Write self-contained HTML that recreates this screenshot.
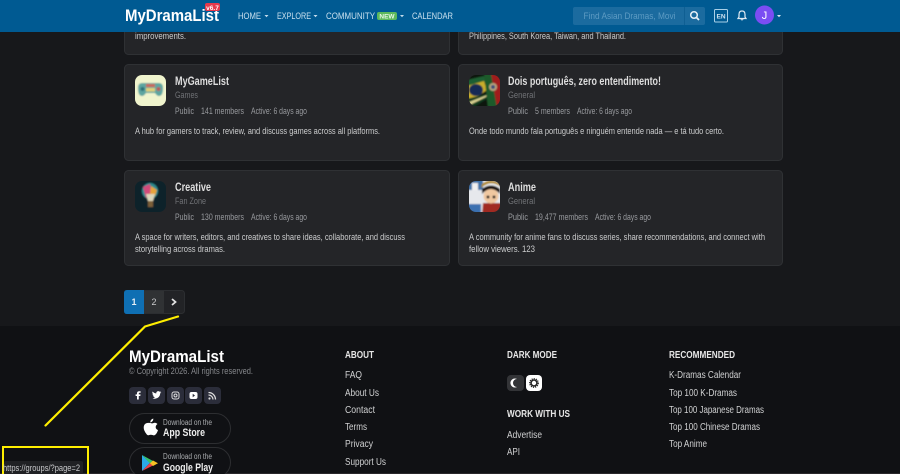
<!DOCTYPE html>
<html lang="en"><head><meta charset="utf-8"><title>Groups - MyDramaList</title>
<style>
html,body{margin:0;padding:0;width:900px;height:474px;overflow:hidden;background:#17181b}
svg{display:block;filter:blur(.3px)}
text{font-family:"Liberation Sans",sans-serif;white-space:pre}
.nav{font-size:9.2px;fill:#c9e0ee}
.t{font-size:11.500px;font-weight:bold;fill:#dedede}
.s{font-size:8.800px;fill:#707276}
.m{font-size:8.800px;fill:#989a9e}
.d{font-size:8.800px;fill:#cbcccd}
.h{font-size:9.800px;font-weight:bold;fill:#e6e6e6}
.l{font-size:9.800px;fill:#d0d1d2}
</style></head><body>
<svg width="900" height="474" viewBox="0 0 900 474" xmlns="http://www.w3.org/2000/svg">
<defs>
<clipPath id="c1"><rect x="135" y="75" width="31" height="31" rx="7"/></clipPath>
<clipPath id="c2"><rect x="469" y="75" width="31" height="31" rx="7"/></clipPath>
<clipPath id="c3"><rect x="135" y="181" width="31" height="31" rx="7"/></clipPath>
<clipPath id="c4"><rect x="469" y="181" width="31" height="31" rx="7"/></clipPath>
<filter id="b" x="-10%" y="-10%" width="120%" height="120%"><feGaussianBlur stdDeviation=".7"/></filter>
</defs>
<rect width="900" height="474" fill="#17181b"/>

<!-- cards -->
<g fill="#242528" stroke="#2f3134">
<rect x="124.500" y="10.500" width="325" height="44" rx="4"/>
<rect x="458.500" y="10.500" width="324" height="44" rx="4"/>
<rect x="124.500" y="64.500" width="325" height="96" rx="4"/>
<rect x="458.500" y="64.500" width="324" height="96" rx="4"/>
<rect x="124.500" y="170.500" width="325" height="95" rx="4"/>
<rect x="458.500" y="170.500" width="324" height="95" rx="4"/>
</g>
<text class="d" x="135" y="39" textLength="51" lengthAdjust="spacingAndGlyphs">improvements.</text>
<text class="d" x="469" y="39" textLength="157" lengthAdjust="spacingAndGlyphs">Philippines, South Korea, Taiwan, and Thailand.</text>

<!-- card: MyGameList -->
<g clip-path="url(#c1)"><g filter="url(#b)">
<rect x="133" y="73" width="35" height="35" fill="#f0f4cd"/>
<path d="M142 83 H159 Q163 83 163 88 Q163 96 159 96 Q157 96 155 93 H146 Q144 96 142 96 Q138 96 138 88 Q138 83 142 83Z" fill="#5da5a0"/>
<rect x="146" y="84" width="9" height="3" fill="#c9675c"/>
<rect x="146" y="88" width="9" height="3.500" fill="#e0d078"/>
<circle cx="142.500" cy="89" r="2" fill="#2e6f78"/><circle cx="158.500" cy="89" r="2" fill="#b95c58"/>
</g></g>
<text class="t" x="175" y="85" textLength="54" lengthAdjust="spacingAndGlyphs">MyGameList</text>
<text class="s" x="175" y="98" textLength="23" lengthAdjust="spacingAndGlyphs">Games</text>
<text class="m" x="175" y="114" textLength="19" lengthAdjust="spacingAndGlyphs">Public</text>
<text class="m" x="201" y="114" textLength="43" lengthAdjust="spacingAndGlyphs">141 members</text>
<text class="m" x="251" y="114" textLength="56" lengthAdjust="spacingAndGlyphs">Active: 6 days ago</text>
<text class="d" x="135" y="134" textLength="245" lengthAdjust="spacingAndGlyphs">A hub for gamers to track, review, and discuss games across all platforms.</text>

<!-- card: Dois -->
<g clip-path="url(#c2)"><g filter="url(#b)">
<rect x="467" y="73" width="35" height="35" fill="#10160f"/>
<path d="M467 80 L484 76 L487 82 L467 90Z" fill="#1b5f30"/>
<path d="M467 86 L484 81 L487 90 L474 99 L467 98Z" fill="#c9ae2a"/>
<ellipse cx="476" cy="90" rx="7" ry="6" fill="#152a55"/>
<path d="M467 99 L486 94 L488 98 L472 108 L467 108Z" fill="#0f3a1e"/>
<path d="M469 102 L487 95 L486 97 L470 105Z" fill="#d8d090"/>
<path d="M490 73 H502 V108 H496Z" fill="#a01c1c"/>
<path d="M484 73 L491 73 L497 108 L488 108Z" fill="#1a5a2b"/>
<circle cx="493" cy="87" r="4" fill="#b5a57f"/><circle cx="493" cy="87" r="2" fill="#3a4f7a"/>
</g></g>
<text class="t" x="508" y="85" textLength="153" lengthAdjust="spacingAndGlyphs">Dois português, zero entendimento!</text>
<text class="s" x="508" y="98" textLength="27" lengthAdjust="spacingAndGlyphs">General</text>
<text class="m" x="508" y="114" textLength="20" lengthAdjust="spacingAndGlyphs">Public</text>
<text class="m" x="535" y="114" textLength="35" lengthAdjust="spacingAndGlyphs">5 members</text>
<text class="m" x="577" y="114" textLength="55" lengthAdjust="spacingAndGlyphs">Active: 6 days ago</text>
<text class="d" x="469" y="134" textLength="255" lengthAdjust="spacingAndGlyphs">Onde todo mundo fala português e ninguém entende nada — e tá tudo certo.</text>

<!-- card: Creative -->
<g clip-path="url(#c3)"><g filter="url(#b)">
<rect x="133" y="179" width="35" height="35" fill="#0f2029"/>
<circle cx="150" cy="191" r="8" fill="#2b8a8f"/>
<path d="M143 187 L150 184 L152 193 L146 198Z" fill="#d24a7c"/>
<path d="M151 186 L157 190 L155 196 L150 194Z" fill="#e6a43a"/>
<path d="M146 194 L155 194 L153 201 L148 201Z" fill="#dcd6ba"/>
<rect x="148" y="201" width="5" height="6" fill="#7a5f38"/>
</g></g>
<text class="t" x="175" y="191" textLength="36" lengthAdjust="spacingAndGlyphs">Creative</text>
<text class="s" x="175" y="204" textLength="31" lengthAdjust="spacingAndGlyphs">Fan Zone</text>
<text class="m" x="175" y="220" textLength="19" lengthAdjust="spacingAndGlyphs">Public</text>
<text class="m" x="201" y="220" textLength="43" lengthAdjust="spacingAndGlyphs">130 members</text>
<text class="m" x="251" y="220" textLength="56" lengthAdjust="spacingAndGlyphs">Active: 6 days ago</text>
<text class="d" x="135" y="240" textLength="270" lengthAdjust="spacingAndGlyphs">A space for writers, editors, and creatives to share ideas, collaborate, and discuss</text>
<text class="d" x="135" y="252" textLength="90" lengthAdjust="spacingAndGlyphs">storytelling across dramas.</text>

<!-- card: Anime -->
<g clip-path="url(#c4)"><g filter="url(#b)">
<rect x="467" y="179" width="35" height="35" fill="#e6e8ec"/>
<rect x="467" y="179" width="16" height="11" fill="#3f72a8"/>
<rect x="472" y="183" width="6" height="7" fill="#f0f0f0"/>
<path d="M467 204 H481 V214 H467Z" fill="#3a6fb0"/>
<path d="M483 203 H502 V214 H482Z" fill="#a12a22"/>
<circle cx="491" cy="196" r="7.500" fill="#f0c8a0"/>
<path d="M482 194 Q491 184 500 194 L500 189 Q491 182 482 189Z" fill="#14100f"/>
<path d="M481 188 Q491 179 501 187 L500 184 Q491 177 482 184Z" fill="#b08a28"/>
<circle cx="488" cy="197" r="1.500" fill="#111"/><circle cx="494" cy="197" r="1.500" fill="#111"/>
</g></g>
<text class="t" x="508" y="191" textLength="28" lengthAdjust="spacingAndGlyphs">Anime</text>
<text class="s" x="508" y="204" textLength="27" lengthAdjust="spacingAndGlyphs">General</text>
<text class="m" x="508" y="220" textLength="20" lengthAdjust="spacingAndGlyphs">Public</text>
<text class="m" x="535" y="220" textLength="53" lengthAdjust="spacingAndGlyphs">19,477 members</text>
<text class="m" x="595" y="220" textLength="56" lengthAdjust="spacingAndGlyphs">Active: 6 days ago</text>
<text class="d" x="469" y="240" textLength="296" lengthAdjust="spacingAndGlyphs">A community for anime fans to discuss series, share recommendations, and connect with</text>
<text class="d" x="469" y="252" textLength="66" lengthAdjust="spacingAndGlyphs">fellow viewers. 123</text>

<!-- pagination -->
<rect x="124.500" y="290.500" width="60" height="23" rx="3" fill="#222326" stroke="#2c2e31"/>
<rect x="144" y="291" width="20" height="22" fill="#303234"/>
<path d="M127 290 H144 V314 H127 Q124 314 124 311 V293 Q124 290 127 290Z" fill="#0f6fb3"/>
<text x="134" y="305" text-anchor="middle" font-size="9" font-weight="bold" fill="#e6eef5">1</text>
<text x="154" y="305" text-anchor="middle" font-size="9" fill="#c9cacc">2</text>
<path d="M172 299 L175.500 302 L172 305" fill="none" stroke="#e2e2e2" stroke-width="1.800"/>

<!-- footer -->
<rect x="0" y="326" width="900" height="148" fill="#101114"/>
<rect x="0" y="473" width="900" height="1" fill="#29272a"/>
<text x="129" y="362" font-size="17px" font-weight="bold" fill="#fff" textLength="95" lengthAdjust="spacingAndGlyphs">MyDramaList</text>
<text x="129" y="374" font-size="8.800px" fill="#85878b" textLength="124" lengthAdjust="spacingAndGlyphs">© Copyright 2026. All rights reserved.</text>

<g fill="#2b2d3a">
<rect x="129" y="387" width="17" height="17" rx="4"/>
<rect x="148" y="387" width="17" height="17" rx="4"/>
<rect x="167" y="387" width="17" height="17" rx="4"/>
<rect x="185" y="387" width="17" height="17" rx="4"/>
<rect x="204" y="387" width="17" height="17" rx="4"/>
</g>
<path d="M138.800 399.500 V396 H140.300 L140.500 394.400 H138.800 V393.400 Q138.800 392.700 139.600 392.700 H140.600 V391.200 H139.200 Q137 391.200 137 393.200 V394.400 H135.600 V396 H137 V399.500Z" fill="#fff"/>
<path d="M152.500 398.500 Q154 398.900 155.500 398.600 Q159.800 397.800 160.300 393.200 L161.300 392.100 L160 392.400 L160.900 391.300 L159.700 391.800 Q158.200 390.500 156.700 391.900 Q156 392.700 156.300 393.400 Q154 393.300 152.600 391.500 Q151.800 393 153.200 394.300 L152.500 394.100 Q152.600 395.500 153.900 396 L153.100 396 Q153.600 397 154.900 397.200 Q153.900 398.100 152.500 398.500Z" fill="#fff"/>
<rect x="172" y="392" width="7" height="7" rx="2" fill="none" stroke="#ddd" stroke-width="1"/>
<circle cx="175.500" cy="395.500" r="1.500" fill="none" stroke="#ddd" stroke-width="1"/>
<rect x="189.500" y="392" width="8" height="7" rx="2" fill="#fff"/><path d="M192.700 393.800 L195 395.500 L192.700 397.200Z" fill="#2b2d3a"/>
<circle cx="209.500" cy="398.500" r="1.100" fill="#ddd"/>
<path d="M208.500 395 A4.500 4.500 0 0 1 213 399.500 M208.500 392.500 A7 7 0 0 1 215.500 399.500" fill="none" stroke="#ddd" stroke-width="1.300"/>

<rect x="129.500" y="413.500" width="101" height="30" rx="15" fill="#101114" stroke="#2d2e31"/>
<rect x="129.500" y="447.500" width="101" height="30" rx="15" fill="#101114" stroke="#2d2e31"/>
<path d="M150.500 423 Q152 423.800 154 422.900 Q156 422.300 157.500 424 Q155.500 425.500 155.700 427.500 Q156 429.300 158 430 Q157 433.500 155 435 Q153.800 435.700 152.500 435 Q150.800 434.400 149.300 435 Q148 435.800 146.800 434.500 Q143.500 430.500 143.700 427 Q144.200 423.500 147 423 Q148.800 422.700 150.500 423Z" fill="#fff"/>
<path d="M150.200 422.500 Q150.200 419.500 153.300 418.500 Q153.500 421.700 150.200 422.500Z" fill="#fff"/>
<text x="163" y="425" font-size="7.800px" fill="#aaacaf" textLength="49" lengthAdjust="spacingAndGlyphs">Download on the</text>
<text x="163" y="436" font-size="11px" font-weight="bold" fill="#eee" textLength="42" lengthAdjust="spacingAndGlyphs">App Store</text>
<path d="M142 455 L150 463 L142 471Z" fill="#2aa9e8"/>
<path d="M142 455 L153 461 L150 463.500Z" fill="#35c26a"/>
<path d="M142 471 L153 465.500 L150 463Z" fill="#e8434a"/>
<path d="M153 460.500 L158 463.200 L153 466 L150 463.200Z" fill="#f7c325"/>
<text x="163" y="459" font-size="7.800px" fill="#aaacaf" textLength="49" lengthAdjust="spacingAndGlyphs">Download on the</text>
<text x="163" y="471" font-size="11px" font-weight="bold" fill="#eee" textLength="50" lengthAdjust="spacingAndGlyphs">Google Play</text>

<text class="h" x="345" y="358" textLength="29" lengthAdjust="spacingAndGlyphs">ABOUT</text>
<text class="l" x="345" y="378" textLength="17" lengthAdjust="spacingAndGlyphs">FAQ</text>
<text class="l" x="345" y="396" textLength="34" lengthAdjust="spacingAndGlyphs">About Us</text>
<text class="l" x="345" y="413" textLength="30" lengthAdjust="spacingAndGlyphs">Contact</text>
<text class="l" x="345" y="430" textLength="22" lengthAdjust="spacingAndGlyphs">Terms</text>
<text class="l" x="345" y="447" textLength="28" lengthAdjust="spacingAndGlyphs">Privacy</text>
<text class="l" x="345" y="465" textLength="41" lengthAdjust="spacingAndGlyphs">Support Us</text>

<text class="h" x="507" y="358" textLength="50" lengthAdjust="spacingAndGlyphs">DARK MODE</text>
<rect x="507" y="375" width="17" height="16" rx="4" fill="#333437"/>
<path d="M517 379 A4.500 4.500 0 1 0 517 387 A4 4 0 0 1 517 379Z" fill="#fff"/>
<rect x="526" y="375" width="16" height="16" rx="4" fill="#fff"/>
<circle cx="534" cy="383" r="3" fill="none" stroke="#222" stroke-width="1.600"/>
<circle cx="534" cy="383" r="4.300" fill="none" stroke="#222" stroke-width="1.200" stroke-dasharray="1.200 1"/>
<text class="h" x="507" y="417" textLength="63" lengthAdjust="spacingAndGlyphs">WORK WITH US</text>
<text class="l" x="507" y="438" textLength="35" lengthAdjust="spacingAndGlyphs">Advertise</text>
<text class="l" x="507" y="455" textLength="13" lengthAdjust="spacingAndGlyphs">API</text>

<text class="h" x="669" y="358" textLength="66" lengthAdjust="spacingAndGlyphs">RECOMMENDED</text>
<text class="l" x="669" y="378" textLength="72" lengthAdjust="spacingAndGlyphs">K-Dramas Calendar</text>
<text class="l" x="669" y="396" textLength="68" lengthAdjust="spacingAndGlyphs">Top 100 K-Dramas</text>
<text class="l" x="669" y="413" textLength="95" lengthAdjust="spacingAndGlyphs">Top 100 Japanese Dramas</text>
<text class="l" x="669" y="430" textLength="91" lengthAdjust="spacingAndGlyphs">Top 100 Chinese Dramas</text>
<text class="l" x="669" y="447" textLength="38" lengthAdjust="spacingAndGlyphs">Top Anime</text>

<!-- header -->
<rect x="0" y="0" width="900" height="32" fill="#005a92"/>
<text x="125" y="21" font-size="17px" font-weight="bold" fill="#fff" textLength="94" lengthAdjust="spacingAndGlyphs">MyDramaList</text>
<rect x="205" y="3" width="15" height="8" rx="2" fill="#e5394c"/>
<text x="212.500" y="10" text-anchor="middle" font-size="6.500" font-weight="bold" fill="#fff">v6.7</text>
<text class="nav" x="238" y="19" textLength="23" lengthAdjust="spacingAndGlyphs">HOME</text>
<path d="M264.500 15 h4 l-2 2.300z" fill="#c3dcec"/>
<text class="nav" x="277" y="19" textLength="34" lengthAdjust="spacingAndGlyphs">EXPLORE</text>
<path d="M313.500 15 h4 l-2 2.300z" fill="#c3dcec"/>
<text class="nav" x="326" y="19" textLength="49" lengthAdjust="spacingAndGlyphs">COMMUNITY</text>
<rect x="377" y="12" width="20" height="8" rx="2" fill="#5cb85c"/>
<text x="387" y="18.700" text-anchor="middle" font-size="6.500" font-weight="bold" fill="#e8f6e8">NEW</text>
<path d="M400 15 h4 l-2 2.300z" fill="#c3dcec"/>
<text class="nav" x="412" y="19" textLength="41" lengthAdjust="spacingAndGlyphs">CALENDAR</text>

<rect x="573" y="7" width="132" height="18" rx="2" fill="#1b6b9f"/>
<rect x="684" y="7" width="1" height="18" fill="#0f5f93"/>
<text x="583.500" y="19" font-size="9.200" fill="#5d9bc3" textLength="92" lengthAdjust="spacingAndGlyphs">Find Asian Dramas, Movi</text>
<circle cx="694" cy="15" r="3.300" fill="none" stroke="#e6f0f7" stroke-width="1.500"/>
<path d="M696.500 17.500 L699 20" stroke="#e6f0f7" stroke-width="1.800" fill="none"/>
<rect x="714.500" y="9.500" width="13" height="12.500" rx="1" fill="none" stroke="#a9d0e8"/>
<text x="721" y="18.500" text-anchor="middle" font-size="6.500" font-weight="bold" fill="#cfe3f0">EN</text>
<path d="M742 11 Q745 11 745 14.500 V17 L746 18.500 H738 L739 17 V14.500 Q739 11 742 11Z" fill="none" stroke="#dfeaf2" stroke-width="1.200"/>
<path d="M741 19.500 h2 l-1 .8z" fill="#dfeaf2" stroke="#dfeaf2" stroke-width=".6"/>
<circle cx="764.500" cy="15" r="9.500" fill="#7b4df3"/>
<text x="764.500" y="19" text-anchor="middle" font-size="11" fill="#fff">J</text>
<path d="M777 15 h4 l-2 2.300z" fill="#dfeaf2"/>

<!-- yellow annotation -->
<rect x="3" y="447" width="85" height="28" fill="none" stroke="#ffee00" stroke-width="2"/>
<rect x="4" y="461" width="79" height="13" rx="2" fill="#202124"/>
<text x="3" y="471" font-size="8.800" fill="#c9cacc" textLength="77" lengthAdjust="spacingAndGlyphs">https://groups/?page=2</text>
<path d="M178 316.500 L145 326.500 L45.500 425.500" fill="none" stroke="#ffee00" stroke-width="2.200" stroke-linecap="round" stroke-linejoin="round"/>
</svg>
</body></html>
